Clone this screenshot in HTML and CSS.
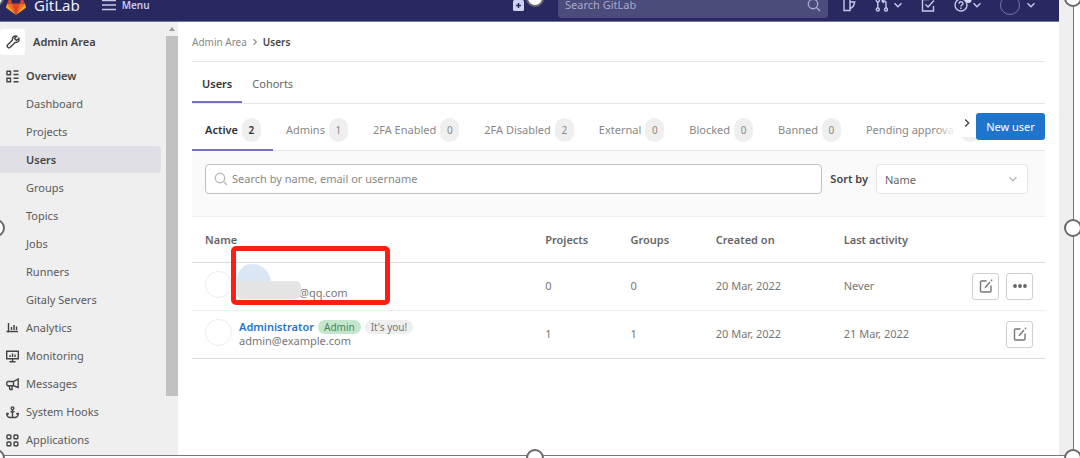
FILE: index.html
```html
<!DOCTYPE html>
<html lang="en">
<head>
<meta charset="utf-8">
<title>Users · Admin Area · GitLab</title>
<link rel="stylesheet" href="styles.css">
</head>
<body>
<svg class="sprite" aria-hidden="true">
  <symbol id="chevron" viewBox="0 0 10 10"><path d="M1.500 3.200 5 6.700l3.500-3.500"/></symbol>
  <symbol id="search" viewBox="0 0 14 14"><circle cx="6" cy="6" r="4.700"/><path d="m9.500 9.500 3.500 3.500"/></symbol>
  <symbol id="edit" viewBox="0 0 14 14"><path d="M7.500 2H2.500a1 1 0 0 0-1 1v9a1 1 0 0 0 1 1h8.500a1 1 0 0 0 1-1V6.500M6 8.700l5-5.700M12 2l1-1.200"/></symbol>
</svg>
<div class="frame">
  <header class="topbar">
    <div class="topbar-row">
      <a class="brand" href="#">
        <svg class="logo" viewBox="0 0 20 19"><path fill="#e24329" d="m10 19 3.700-11.500H6.300z"/><path fill="#fc6d26" d="M10 19 6.300 7.500H1.200zM10 19l3.700-11.500h5.100z"/><path fill="#fca326" d="M1.200 7.500 0 11c-.1.400 0 .8.300 1L10 19zM18.800 7.500 20 11c.1.400 0 .8-.3 1L10 19z"/><path fill="#e24329" d="M1.200 7.500h5.100L4 1zM18.800 7.500h-5.100L16 1z"/></svg>
        GitLab
      </a>
      <button class="bar-btn menu-btn" type="button">
        <svg class="i14" viewBox="0 0 14 14"><path d="M0 2.500h14M0 7h14M0 11.500h14"/></svg>
        Menu
      </button>
      <button class="bar-btn plus-btn" type="button" aria-label="Create new">
        <svg class="i11" viewBox="0 0 11 11"><rect width="11" height="11" rx="1.500" fill="#d1d1f0" stroke="none"/><path stroke="#292961" d="M5.500 3v5M3 5.500h5"/></svg>
      </button>
      <div class="global-search">
        <input type="search" placeholder="Search GitLab" aria-label="Search GitLab">
        <svg class="i14"><use href="#search"/></svg>
      </div>
      <nav class="bar-icons">
        <button class="bar-btn" type="button" aria-label="Issues"><svg class="i14" viewBox="0 0 14 14"><path d="M2 1h6v11.500H2zM8 4h4.700L11.500 8 8 11"/></svg></button>
        <button class="bar-btn" type="button" aria-label="Merge requests"><svg class="i14" viewBox="0 0 14 14"><circle cx="2.800" cy="2.500" r="1.500"/><circle cx="2.800" cy="11.500" r="1.500"/><circle cx="11" cy="11.500" r="1.500"/><path d="M2.800 4v6M11 10V5c0-1.500-1-2-2-2H7.500M9 1 7 3l2 2"/></svg><svg class="i10"><use href="#chevron"/></svg></button>
        <button class="bar-btn" type="button" aria-label="To-Do List"><svg class="i14" viewBox="0 0 14 14"><path d="M8 1.500H1.500V13h11V8M4.500 6.500l2.500 2.500 6-6.500"/></svg></button>
        <button class="bar-btn" type="button" aria-label="Help"><svg class="i14 help" viewBox="0 0 14 14"><circle cx="7" cy="7" r="6"/><path d="M5 5.800c0-2.800 4-2.600 4-.3 0 1.500-2 1.300-2 3M7 9.500V11"/><circle class="dot" cx="14.500" cy="2" r="3"/></svg><svg class="i10"><use href="#chevron"/></svg></button>
        <button class="bar-btn" type="button" aria-label="Account"><span class="me"></span><svg class="i10"><use href="#chevron"/></svg></button>
      </nav>
    </div>
  </header>

  <div class="body">
    <aside class="sidebar">
      <nav class="side-nav" aria-label="Admin navigation">
        <a class="context" href="#"><span class="context-icon"><svg class="i14" viewBox="0 0 14 14"><path d="M12.800 3.200 10.500 5.500 8.500 3.500l2.300-2.300C8.500.3 6 2 6.500 5L1.500 10c-1.200 1.300 1 3.700 2.500 2.500l5-5c3 .5 4.700-2 3.800-4.300z"/><path d="M3.400 10.600h.2"/></svg></span>Admin Area</a>
        <a class="side-link strong" href="#"><svg class="i13" viewBox="0 0 13 13"><path d="M1 1.200h3.500v3.600H1zM1 8.200h3.500v3.600H1zM7.500 1h5M7.500 4.500h5M7.500 8.200h5M7.500 11.800h5"/></svg>Overview</a>
        <a class="side-link sub" href="#">Dashboard</a>
        <a class="side-link sub" href="#">Projects</a>
        <a class="side-link sub active" href="#" aria-current="page">Users</a>
        <a class="side-link sub" href="#">Groups</a>
        <a class="side-link sub" href="#">Topics</a>
        <a class="side-link sub" href="#">Jobs</a>
        <a class="side-link sub" href="#">Runners</a>
        <a class="side-link sub" href="#">Gitaly Servers</a>
        <a class="side-link" href="#"><svg class="i13" viewBox="0 0 13 13"><path d="M2.500 1v9.500M.5 9.500H12M5.500 5v3M8 3v5M10.500 4.500V8"/></svg>Analytics</a>
        <a class="side-link" href="#"><svg class="i13" viewBox="0 0 13 13"><path d="M.7 1.200h11.600v7.600H.7zM3.500 11.800h6M6.500 9v2.500M4 5v2M6.500 3.500V7M9 4.500V7"/></svg>Monitoring</a>
        <a class="side-link" href="#"><svg class="i13" viewBox="0 0 13 13"><path d="M12.200 1v8.500L7.500 7.800H2C.3 7.800.3 3.500 2 3.500h5.500zM7.500 3.500v4.300M3 8l1 3.500h2V8"/></svg>Messages</a>
        <a class="side-link" href="#"><svg class="i13" viewBox="0 0 13 13"><circle cx="6.500" cy="2.300" r="1.400"/><path d="M6.500 3.800V12M4.500 5.800h4M1 7.500v1.200c0 1.600 1.500 2.800 3 2.800h5c1.500 0 3-1.200 3-2.800V7.500M0 8.800l1-1.500L2.800 8M13 8.800l-1-1.500-1.800.7"/></svg>System Hooks</a>
        <a class="side-link" href="#"><svg class="i13" viewBox="0 0 13 13"><rect x="1" y="1" width="3.800" height="3.800" rx=".8"/><rect x="8" y="1" width="3.800" height="3.800" rx=".8"/><rect x="1" y="8" width="3.800" height="3.800" rx=".8"/><rect x="8" y="8" width="3.800" height="3.800" rx=".8"/></svg>Applications</a>
      </nav>
      <div class="scrollbar"><span class="arrow"></span><span class="thumb"></span></div>
    </aside>

    <main class="content">
      <nav class="breadcrumb" aria-label="Breadcrumb"><a href="#">Admin Area</a><svg class="i8 right"><use href="#chevron"/></svg><a class="here" href="#">Users</a></nav>
      <nav class="tabs"><a class="tab on" href="#">Users</a><a class="tab" href="#">Cohorts</a></nav>
      <div class="state-row">
        <nav class="states">
          <a class="state on" href="#">Active<span class="count">2</span></a>
          <a class="state" href="#">Admins<span class="count">1</span></a>
          <a class="state" href="#">2FA Enabled<span class="count">0</span></a>
          <a class="state" href="#">2FA Disabled<span class="count">2</span></a>
          <a class="state" href="#">External<span class="count">0</span></a>
          <a class="state" href="#">Blocked<span class="count">0</span></a>
          <a class="state" href="#">Banned<span class="count">0</span></a>
          <a class="state" href="#">Pending approval<span class="count"></span></a>
          <button class="scroll-next" type="button" aria-label="Scroll right"><svg class="i10 right"><use href="#chevron"/></svg></button>
        </nav>
        <button class="new-user" type="button">New user</button>
      </div>
      <form class="filters">
        <div class="search-box">
          <svg class="i14"><use href="#search"/></svg>
          <input type="search" placeholder="Search by name, email or username" aria-label="Search users">
        </div>
        <label for="sort">Sort by</label>
        <div class="sort-box">
          <select id="sort"><option>Name</option></select>
          <svg class="i10"><use href="#chevron"/></svg>
        </div>
      </form>
      <table class="users">
        <thead>
          <tr><th class="c-name">Name</th><th class="c-num">Projects</th><th class="c-num">Groups</th><th class="c-date">Created on</th><th>Last activity</th></tr>
        </thead>
        <tbody>
          <tr>
            <td><div class="person"><span class="avatar"></span><div class="who masked"><span class="mask-name"></span><div class="mail">@qq.com</div><span class="mask-mail"></span><span class="highlight"></span></div></div></td>
            <td>0</td><td>0</td><td>20 Mar, 2022</td>
            <td><div class="last">Never<span class="actions"><button type="button" aria-label="Edit"><svg class="i14"><use href="#edit"/></svg></button><button type="button" aria-label="More actions"><svg class="i14 dots" viewBox="0 0 14 14"><circle cx="2" cy="7" r="1.900"/><circle cx="7" cy="7" r="1.900"/><circle cx="12" cy="7" r="1.900"/></svg></button></span></div></td>
          </tr>
          <tr>
            <td><div class="person"><span class="avatar"></span><div class="who"><div class="name"><a href="#">Administrator</a><span class="badge green">Admin</span><span class="badge">It's you!</span></div><div class="mail">admin@example.com</div></div></div></td>
            <td>1</td><td>1</td><td>20 Mar, 2022</td>
            <td><div class="last">21 Mar, 2022<span class="actions"><button type="button" aria-label="Edit"><svg class="i14"><use href="#edit"/></svg></button></span></div></td>
          </tr>
        </tbody>
      </table>
    </main>
  </div>
  <span class="handle tl"></span><span class="handle tc"></span><span class="handle tr"></span>
  <span class="handle ml"></span><span class="handle mr"></span>
  <span class="handle bl"></span><span class="handle bc"></span><span class="handle br"></span>
</div>
</body>
</html>
```
FILE: styles.css
```css
* { box-sizing: border-box; }
body { margin: 0; background: #fff; color: #666; font: 11px/16px "Noto Sans", "Open Sans", sans-serif; overflow: hidden; }
a { color: inherit; text-decoration: none; }
button, input, select { font: inherit; color: inherit; margin: 0; }
button { padding: 0; border: 0; background: none; }
input[type="search"] { appearance: none; outline: 0; }
svg { fill: none; stroke: currentColor; stroke-width: 1.4; flex: none; }
.sprite { position: absolute; width: 0; height: 0; }
.i8 { width: 8px; height: 8px; }
.i10 { width: 10px; height: 10px; }
.i11 { width: 11px; height: 11px; }
.i13 { width: 13px; height: 13px; }
.i14 { width: 14px; height: 14px; }
.right { transform: rotate(-90deg); }

/* Selection frame round the app window */
.frame { position: relative; display: flex; flex-direction: column; height: 100vh; margin-right: 6px; padding-right: 14px; background: #efefef; border-right: 1px solid #777; }
.frame::after { content: ""; position: absolute; left: 0; right: 0; bottom: 0; height: 2px; background: #fff; border-top: 1px solid #777; }
.handle { position: absolute; z-index: 5; width: 18px; height: 18px; margin: -9px; border: 2px solid #6a6a6a; border-radius: 50%; background: #fff; }
.tl { left: -5px; top: -2px; } .tc { left: 50%; top: -2px; } .tr { left: 100%; top: -2px; }
.ml { left: -4px; top: 50%; } .mr { left: 100%; top: 50%; }
.bl { left: -4px; top: 100%; } .bc { left: 50%; top: 100%; } .br { left: 100%; top: 100%; }
.tc, .bc { margin-left: -11px; }
.ml, .mr { margin-top: -10px; }

.topbar { flex: none; height: 22px; background: #292961; border-bottom: 1px solid #75759a; overflow: hidden; }
.topbar-row { display: flex; align-items: center; height: 34px; margin-top: -12px; padding: 0 23px 0 6px; color: #c8c8ea; }
.brand { display: flex; align-items: center; gap: 8px; color: #eeeefa; font-size: 15px; }
.logo { width: 20px; height: 19px; stroke: none; }
.bar-btn { display: flex; align-items: center; gap: 4px; }
.menu-btn { gap: 6px; margin-left: 22px; font-size: 10px; font-weight: 600; }
.plus-btn { margin-left: auto; margin-right: 34px; }
.global-search { display: flex; align-items: center; width: 270px; height: 26px; padding: 0 7px; background: #4b4b7c; border-radius: 4px; color: #a9a9cd; }
.global-search input { flex: 1; min-width: 0; border: 0; background: none; padding: 0; }
::placeholder { color: inherit; opacity: 1; }
.bar-icons { display: flex; align-items: center; justify-content: space-between; width: 194px; margin-left: 14px; }
.help { overflow: visible; }
.dot { fill: #d8d8f2; stroke: none; }
.me { width: 20px; height: 20px; border: 1px solid #77779e; border-radius: 50%; margin-right: 2px; }

.body { flex: 1; display: flex; min-height: 0; }
.sidebar { flex: none; display: flex; width: 178px; background: #efefef; color: #5a5a5a; overflow: hidden; }
.side-nav { flex: 1; }
.context { display: flex; align-items: center; gap: 8px; height: 26px; margin: 7px 0; font-weight: 600; color: #444; }
.context-icon { display: grid; place-items: center; width: 25px; height: 26px; background: #fff; border-radius: 3px; }
.side-link { display: flex; align-items: center; gap: 7px; height: 27px; margin: 0 5px 1px 0; padding: 1px 0 0 6px; border-radius: 0 4px 4px 0; }
.side-link svg, .context svg { color: #444; }
.side-link.sub { padding-left: 26px; }
.strong, .active { font-weight: 600; color: #444; }
.active { background: #e0dfe5; }
.scrollbar { display: flex; flex-direction: column; align-items: center; width: 12px; }
.arrow { margin: 5px 0; border: 3px solid transparent; border-top: 0; border-bottom: 4px solid #999; }
.thumb { width: 12px; height: 360px; background: #c1c1c1; }

.content { flex: 1; min-width: 0; padding: 0 14px; background: #fff; }
.breadcrumb { display: flex; align-items: center; gap: 4px; height: 40px; border-bottom: 1px solid #e6e6e6; font-size: 10px; color: #888; }
.here { color: #444; font-weight: 600; }
.tabs { display: flex; height: 42px; border-bottom: 1px solid #e6e6e6; }
.tab { display: flex; align-items: center; padding: 4px 10px 0; border-bottom: 2px solid transparent; }
.tabs .on, .states .on { font-weight: 600; color: #333; border-bottom-color: #7373c4; }
.state-row { display: flex; align-items: flex-start; height: 47px; border-bottom: 1px solid #e6e6e6; }
.states { position: relative; flex: 1; min-width: 0; display: flex; height: 47px; overflow: hidden; }
.state { flex: none; display: flex; align-items: center; gap: 4px; padding: 6px 12px 0 13px; border-bottom: 2px solid transparent; color: #888; }
.count { display: grid; place-items: center; width: 19px; height: 24px; border-radius: 10px; background: #efefef; font-size: 10px; }
.scroll-next { position: absolute; right: 0; top: 5px; display: flex; align-items: center; justify-content: flex-end; width: 40px; height: 28px; padding-right: 4px; color: #444; background: linear-gradient(to right, transparent, #fff 50%); }
.new-user { flex: none; width: 69px; height: 27px; margin-top: 9px; border-radius: 3px; background: #1f75cb; color: #fff; }
.filters { display: flex; align-items: flex-start; height: 66px; padding: 13px 17px 0 13px; background: #fafafa; border-bottom: 1px solid #eee; line-height: 30px; }
.filters label { margin: 0 8px; font-weight: 600; color: #444; }
.search-box, .sort-box { display: flex; align-items: center; height: 30px; background: #fff; border: 1px solid #bfbfbf; border-radius: 4px; }
.search-box { flex: 1; gap: 4px; padding: 0 8px; color: #888; }
.search-box svg { color: #bbb; }
.search-box input { flex: 1; border: 0; padding: 0; background: none; }
.sort-box { position: relative; width: 152px; border-color: #e6e6e6; }
.sort-box select { appearance: none; width: 100%; height: 28px; padding: 0 8px; border: 0; background: none; }
.sort-box svg { position: absolute; right: 9px; color: #bbb; }

.users { width: 100%; border-collapse: collapse; table-layout: fixed; border-bottom: 1px solid #dcdcdc; color: #777; }
.users th { height: 45px; padding: 2px 12px 0; text-align: left; font-weight: 600; color: #666; }
.users td { height: 48px; padding: 0 12px; border-top: 1px solid #eee; }
.users th:first-child, .users td:first-child { padding-left: 13px; }
.users tbody tr:first-child td { border-top-color: #dcdcdc; }
.c-name { width: 40%; } .c-num { width: 10%; } .c-date { width: 15%; }
.person { display: flex; align-items: center; gap: 7px; }
.avatar { width: 27px; height: 27px; margin-bottom: 4px; border: 1px solid #ececec; border-radius: 50%; }
.who { line-height: 14px; }
.masked { position: relative; width: 150px; height: 28px; padding: 14px 0 0 60px; }
.mask-name { position: absolute; left: -2px; top: -8px; width: 34px; height: 20px; border-radius: 16px 20px 0 0; background: #dbe7f5; }
.mask-mail { position: absolute; left: -2px; top: 9px; width: 64px; height: 18px; border-radius: 5px; background: #e5e5e5; }
.highlight { position: absolute; left: -8px; top: -26px; width: 159px; height: 59px; border: 5px solid #ff1e10; border-radius: 5px; }
.name { display: flex; align-items: center; gap: 4px; color: #1f75cb; font-weight: 600; }
.badge { padding: 0 6px; border-radius: 7px; background: #efefef; color: #777; font-size: 10px; font-weight: 400; }
.green { background: #c3e6cd; color: #4a8262; }
.last { display: flex; align-items: center; justify-content: space-between; }
.actions { display: flex; gap: 7px; }
.actions button { display: grid; place-items: center; width: 27px; height: 27px; border: 1px solid #d0d0d0; border-radius: 3px; color: #777; }
.dots { fill: #666; stroke: none; }
```
